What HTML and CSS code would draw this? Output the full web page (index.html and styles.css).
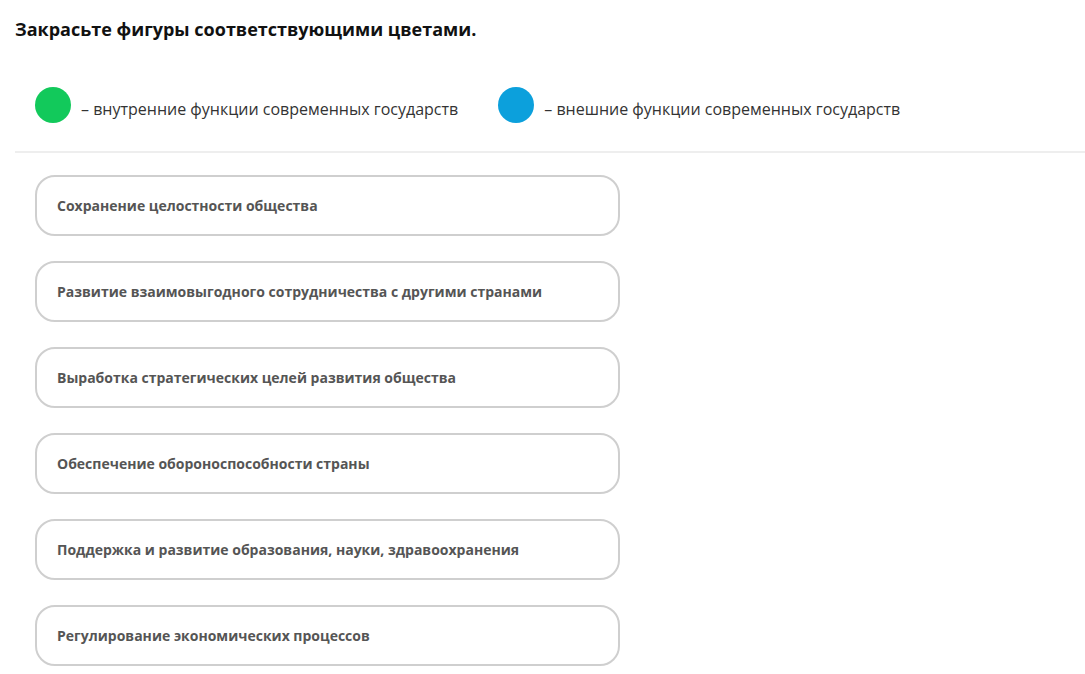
FILE: index.html
```html
<!DOCTYPE html>
<html lang="ru">
<head>
<meta charset="utf-8">
<link rel="stylesheet" href="styles.css">
</head>
<body>
<div class="task">
  <h1 class="title">Закрасьте фигуры соответствующими цветами.</h1>
  <div class="legend">
    <div class="legend-item">
      <span class="dot dot-green"></span>
      <span class="legend-text">– внутренние функции современных государств</span>
    </div>
    <div class="legend-item">
      <span class="dot dot-blue"></span>
      <span class="legend-text">– внешние функции современных государств</span>
    </div>
  </div>
  <div class="items">
    <div class="item">Сохранение целостности общества</div>
    <div class="item">Развитие взаимовыгодного сотрудничества с другими странами</div>
    <div class="item">Выработка стратегических целей развития общества</div>
    <div class="item">Обеспечение обороноспособности страны</div>
    <div class="item">Поддержка и развитие образования, науки, здравоохранения</div>
    <div class="item">Регулирование экономических процессов</div>
  </div>
</div>
</body>
</html>
```
FILE: styles.css
```css
html, body {
  margin: 0;
  padding: 0;
  background: #fff;
}
body {
  font-family: "Open Sans", "Liberation Sans", sans-serif;
}
.task {
  padding: 17px 0 0 15px;
}
.title {
  margin: 0;
  font-size: 18px;
  font-weight: 700;
  line-height: 24px;
  color: #111;
}
.legend {
  display: flex;
  align-items: center;
  gap: 40px;
  padding: 46px 0 28px 20px;
  border-bottom: 2px solid #eeeeee;
}
.legend-item {
  display: flex;
  align-items: center;
  gap: 10px;
}
.dot {
  width: 36px;
  height: 36px;
  border-radius: 50%;
  flex: none;
}
.dot-green { background: #12c95b; }
.dot-blue { background: #0ca0dc; }
.legend-text {
  font-size: 16px;
  color: #333;
  line-height: 22px;
  padding-top: 8px;
}
.items {
  display: flex;
  flex-direction: column;
  gap: 25px;
  padding: 22px 0 0 20px;
}
.item {
  box-sizing: border-box;
  width: 585px;
  height: 61px;
  border: 2px solid #cfcfcf;
  border-radius: 20px;
  padding: 0 20px;
  display: flex;
  align-items: center;
  font-size: 14px;
  font-weight: 700;
  color: #555;
}
```
